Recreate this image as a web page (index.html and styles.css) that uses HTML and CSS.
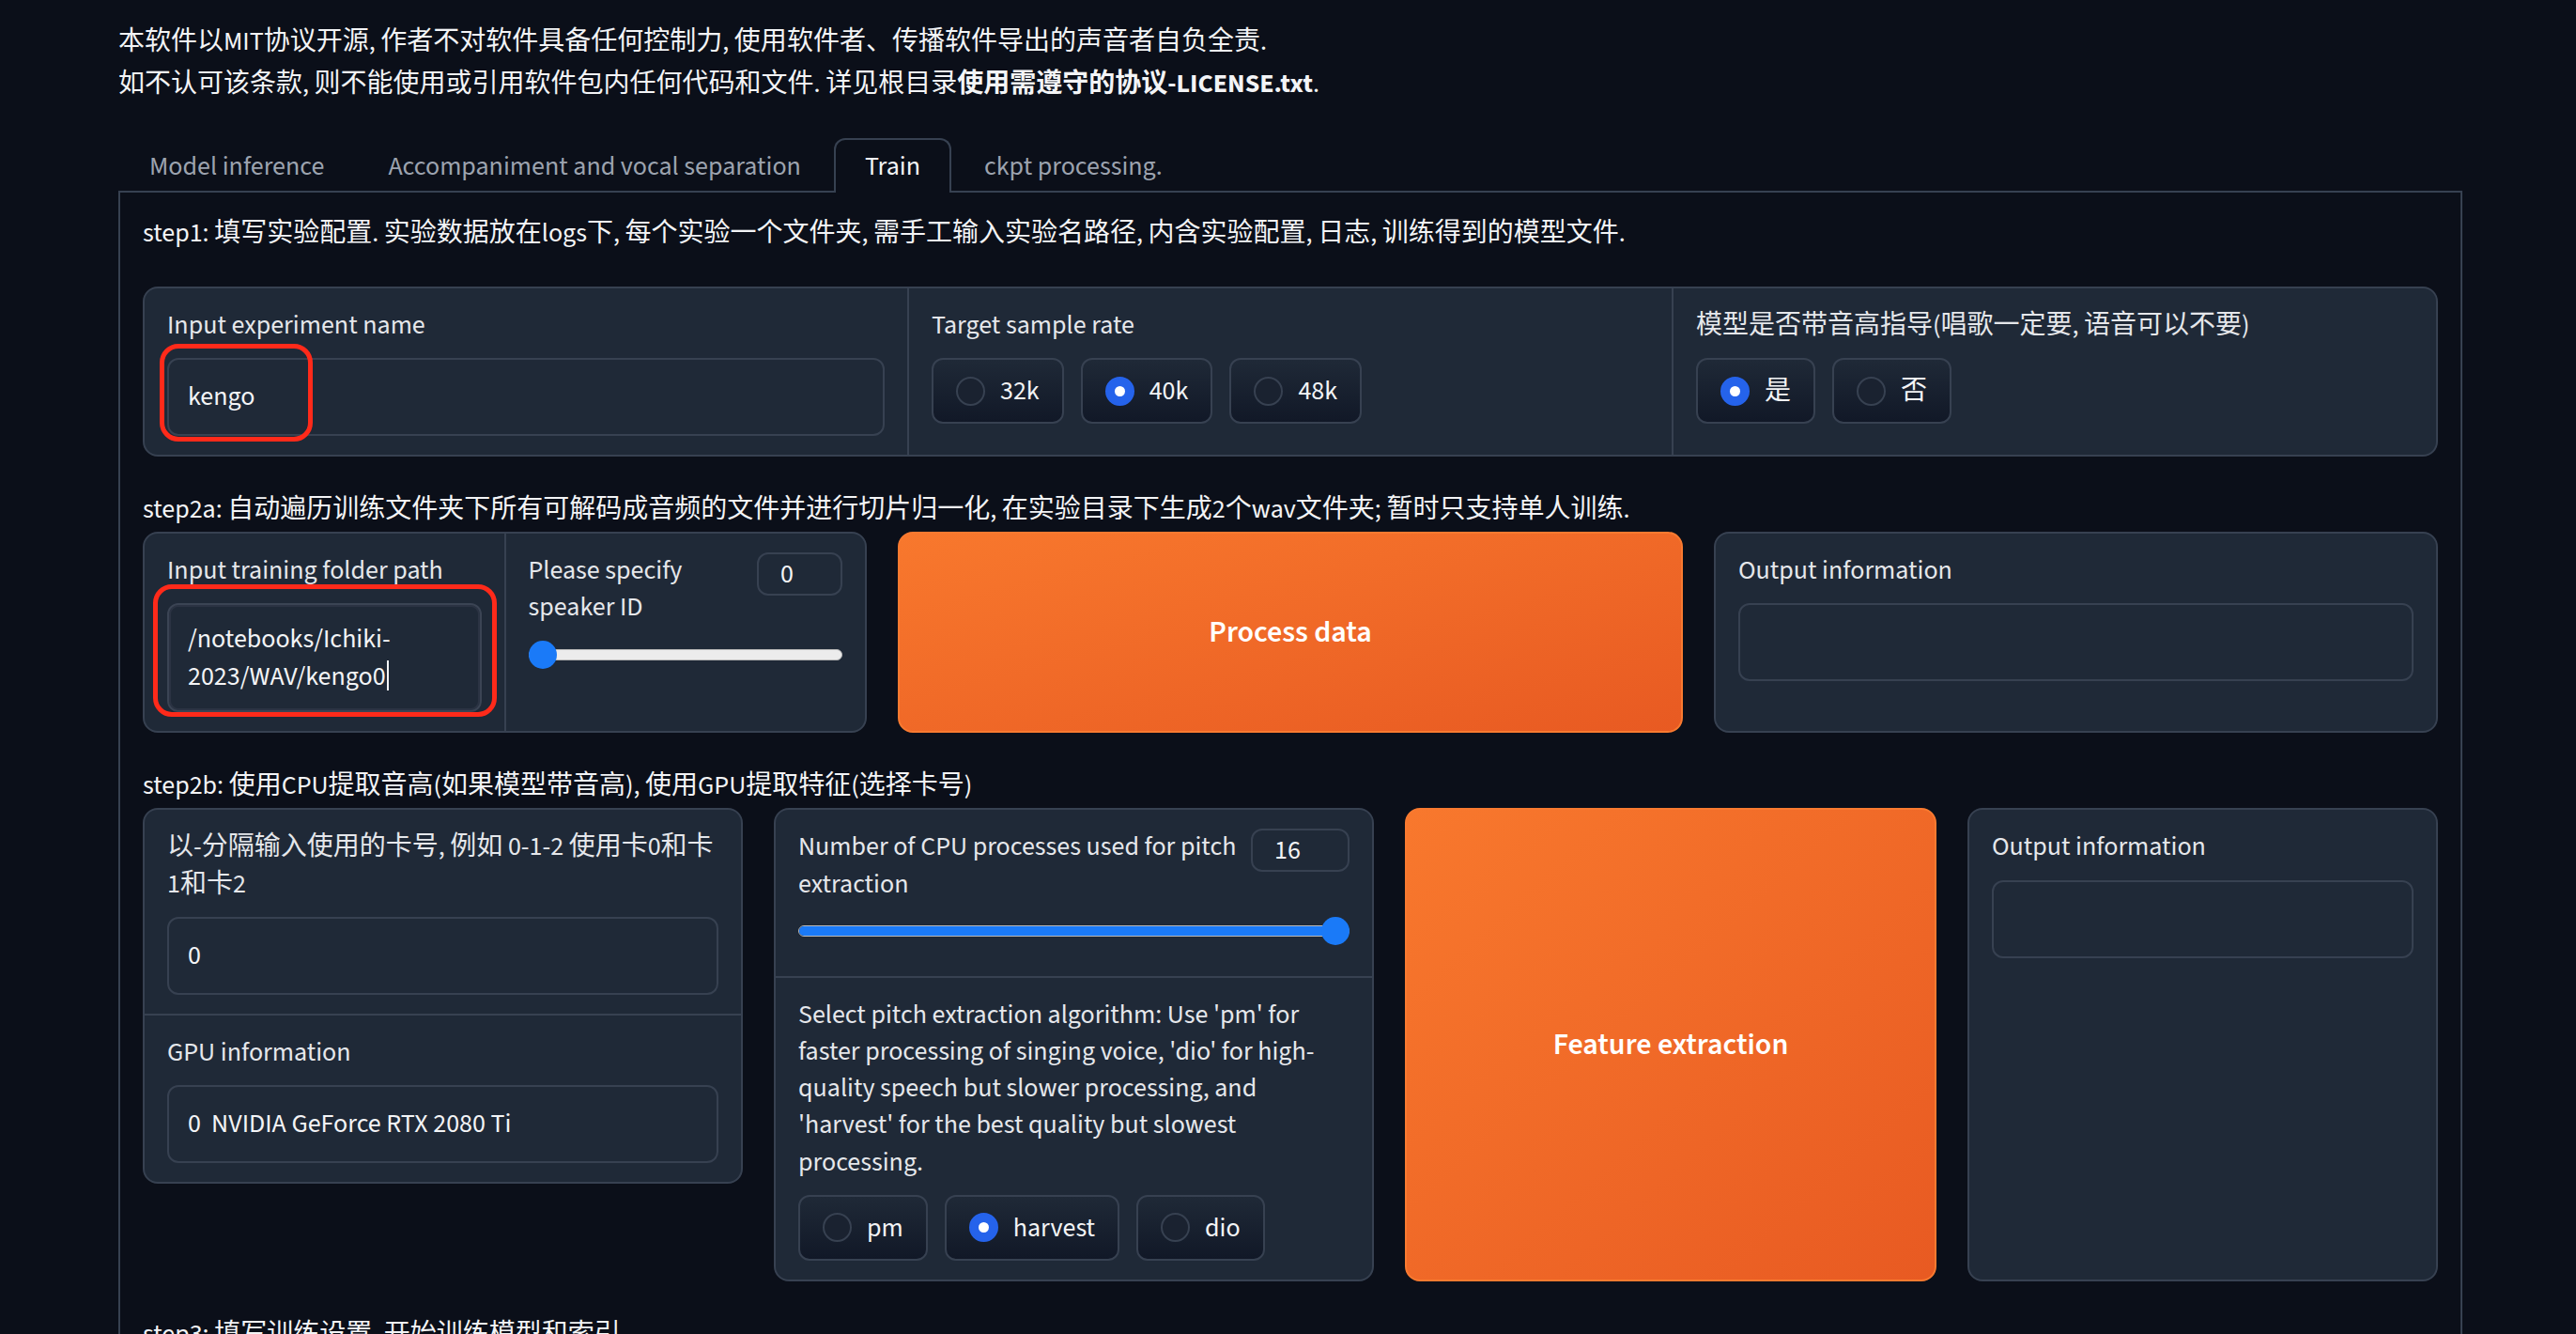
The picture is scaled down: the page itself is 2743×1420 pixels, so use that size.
FILE: index.html
```html
<!DOCTYPE html>
<html lang="zh">
<head>
<meta charset="utf-8">
<title>Train</title>
<link rel="stylesheet" href="styles.css">
</head>
<body>
<div class="app">
  <div class="intro">
    <p>本软件以MIT协议开源, 作者不对软件具备任何控制力, 使用软件者、传播软件导出的声音者自负全责.</p>
    <p>如不认可该条款, 则不能使用或引用软件包内任何代码和文件. 详见根目录<strong>使用需遵守的协议-LICENSE.txt</strong>.</p>
  </div>

  <div class="tabs">
    <div class="tabnav">
      <button class="tab">Model inference</button>
      <button class="tab">Accompaniment and vocal separation</button>
      <button class="tab active">Train</button>
      <button class="tab">ckpt processing.</button>
    </div>

    <div class="panel">
      <div class="md md-first">step1: 填写实验配置. 实验数据放在logs下, 每个实验一个文件夹, 需手工输入实验名路径, 内含实验配置, 日志, 训练得到的模型文件.</div>

      <div class="form">
        <div class="field">
          <span class="label">Input experiment name</span>
          <div class="input">kengo</div>
          <div class="annot annot-1"></div>
        </div>
        <div class="field">
          <span class="label">Target sample rate</span>
          <div class="radios">
            <label class="radio"><span class="dot"></span>32k</label>
            <label class="radio checked"><span class="dot"></span>40k</label>
            <label class="radio"><span class="dot"></span>48k</label>
          </div>
        </div>
        <div class="field">
          <span class="label">模型是否带音高指导(唱歌一定要, 语音可以不要)</span>
          <div class="radios">
            <label class="radio checked"><span class="dot"></span>是</label>
            <label class="radio"><span class="dot"></span>否</label>
          </div>
        </div>
      </div>

      <div class="md">step2a: 自动遍历训练文件夹下所有可解码成音频的文件并进行切片归一化, 在实验目录下生成2个wav文件夹; 暂时只支持单人训练.</div>

      <div class="row">
        <div class="form w-770">
          <div class="field">
            <span class="label">Input training folder path</span>
            <div class="input textarea">/notebooks/Ichiki-<br>2023/WAV/kengo0<span class="caret"></span></div>
            <div class="annot annot-2"></div>
          </div>
          <div class="field">
            <div class="slider-head">
              <span class="label nowrap">Please specify<br>speaker ID</span>
              <span class="num num-a">0</span>
            </div>
            <div class="range" style="--v:0">
              <div class="track"><div class="fill"></div></div>
              <div class="thumb"></div>
            </div>
          </div>
        </div>
        <button class="primary w-835">Process data</button>
        <div class="block w-770">
          <span class="label">Output information</span>
          <div class="input"></div>
        </div>
      </div>

      <div class="md">step2b: 使用CPU提取音高(如果模型带音高), 使用GPU提取特征(选择卡号)</div>

      <div class="row">
        <div class="form col top w-638">
          <div class="field">
            <span class="label nowrap">以-分隔输入使用的卡号, 例如 0-1-2 使用卡0和卡<br>1和卡2</span>
            <div class="input">0</div>
          </div>
          <div class="field">
            <span class="label">GPU information</span>
            <div class="input">0&nbsp;&nbsp;NVIDIA GeForce RTX 2080 Ti</div>
          </div>
        </div>
        <div class="form col w-638">
          <div class="field fixed">
            <div class="slider-head">
              <span class="label nowrap">Number of CPU processes used for pitch<br>extraction</span>
              <span class="num num-b">16</span>
            </div>
            <div class="range" style="--v:1">
              <div class="track"><div class="fill"></div></div>
              <div class="thumb"></div>
            </div>
          </div>
          <div class="field">
            <span class="label">Select pitch extraction algorithm: Use 'pm' for faster processing of singing voice, 'dio' for high-quality speech but slower processing, and 'harvest' for the best quality but slowest processing.</span>
            <div class="radios">
              <label class="radio"><span class="dot"></span>pm</label>
              <label class="radio checked"><span class="dot"></span>harvest</label>
              <label class="radio"><span class="dot"></span>dio</label>
            </div>
          </div>
        </div>
        <button class="primary w-565">Feature extraction</button>
        <div class="block w-500">
          <span class="label">Output information</span>
          <div class="input"></div>
        </div>
      </div>

      <div class="md">step3: 填写训练设置, 开始训练模型和索引</div>
    </div>
  </div>
</div>
</body>
</html>
```

FILE: styles.css
```css
* { box-sizing: border-box; }

html, body {
  margin: 0;
  padding: 0;
  background: #0b0f19;
}

body {
  font-family: "Source Sans 3", "Noto Sans CJK SC", "Noto Sans", sans-serif;
  font-size: 28px;
  color: #f3f4f6;
}

.app {
  padding: 22px 121px 0 126px;
}

.intro p {
  margin: 0;
  line-height: 45px;
}

.intro strong {
  font-weight: 700;
}

/* tabs */
.tabs {
  margin-top: 35px;
}

.tabnav {
  display: flex;
  gap: 2px;
  position: relative;
  z-index: 1;
  margin-bottom: -2px;
}

.tab {
  font: inherit;
  font-size: 28px;
  color: #9ca3af;
  background: transparent;
  border: 2px solid transparent;
  border-bottom: none;
  border-radius: 12px 12px 0 0;
  padding: 0 31px;
  height: 58px;
  line-height: 54px;
  cursor: pointer;
}

.tab.active {
  color: #f3f4f6;
  border-color: #374151;
  background: #0b0f19;
}

.panel {
  border: 2px solid #374151;
  border-bottom: none;
  padding: 23px 24px 80px;
}

.md {
  line-height: 40px;
  margin: 36px 0 4px;
}

.md-first {
  margin: 0 0 37px;
}

/* blocks */
.row {
  display: flex;
  gap: 33px;
  align-items: stretch;
}

.w-770 { flex: 1 1 770px; min-width: 0; }
.w-835 { flex: 1 1 835px; min-width: 0; }
.w-638 { flex: 1 1 638px; min-width: 0; }
.w-565 { flex: 1 1 565px; min-width: 0; }
.w-500 { flex: 1 1 500px; min-width: 0; }

.form {
  display: flex;
  gap: 2px;
  background: #374151;
  border: 2px solid #374151;
  border-radius: 16px;
  overflow: hidden;
}

.form.col {
  flex-direction: column;
}

.form.top {
  align-self: flex-start;
}

.field {
  background: #1f2937;
  padding: 20px 24px;
  flex: 1 1 0;
  min-width: 0;
  position: relative;
}

.form.col .field {
  flex: 1 1 auto;
}

.form.col .field.fixed {
  flex: 0 0 auto;
}

.block {
  background: #1f2937;
  border: 2px solid #374151;
  border-radius: 16px;
  padding: 20px 24px;
}

.label {
  display: block;
  line-height: 1.4;
  color: #e5e7eb;
  margin-bottom: 15px;
}

.nowrap {
  white-space: nowrap;
}

.input {
  background: #1f2937;
  border: 2px solid #374151;
  border-radius: 12px;
  padding: 20px;
  line-height: 39px;
  min-height: 83px;
  color: #f3f4f6;
}

.textarea {
  padding: 16px 20px;
  line-height: 40px;
  border-color: #3b4454;
  box-shadow: inset 0 0 0 2px #2b3343;
}

.caret {
  display: inline-block;
  width: 2px;
  height: 32px;
  background: #f3f4f6;
  vertical-align: -6px;
  margin-left: 1px;
}

/* radios */
.radios {
  display: flex;
  gap: 18px;
  flex-wrap: wrap;
}

.radio {
  display: flex;
  align-items: center;
  gap: 16px;
  height: 70px;
  padding: 0 24px;
  border: 2px solid #374151;
  border-radius: 12px;
  background: linear-gradient(to top, #111827, #1f2937);
  color: #f3f4f6;
  line-height: 1;
}

.dot {
  width: 31px;
  height: 31px;
  border-radius: 50%;
  border: 2px solid #374151;
  background: #1a2230;
  display: flex;
  align-items: center;
  justify-content: center;
  flex: none;
}

.radio.checked .dot {
  background: #2563eb;
  border-color: #2563eb;
}

.radio.checked .dot::after {
  content: "";
  width: 11px;
  height: 11px;
  border-radius: 50%;
  background: #ffffff;
}

/* slider */
.slider-head {
  display: flex;
  justify-content: space-between;
  align-items: flex-start;
  gap: 12px;
}

.slider-head .label {
  margin-bottom: 0;
}

.num {
  flex: none;
  height: 46px;
  line-height: 42px;
  padding: 0 23px;
  border: 2px solid #374151;
  border-radius: 12px;
  color: #f3f4f6;
}

.num-a { width: 91px; }
.num-b { width: 105px; }

.range {
  position: relative;
  height: 30px;
  margin: 15px 0 13px;
}

.track {
  position: absolute;
  left: 0;
  right: 0;
  top: 9px;
  height: 12px;
  border-radius: 6px;
  background: #ececec;
  border: 1px solid #b9b9b9;
  overflow: hidden;
}

.fill {
  height: 100%;
  width: calc(var(--v) * 100%);
  background: #1a7af8;
}

.thumb {
  position: absolute;
  top: 0;
  left: calc((100% - 30px) * var(--v));
  width: 30px;
  height: 30px;
  border-radius: 50%;
  background: #1a7af8;
}

/* primary buttons */
.primary {
  font: inherit;
  font-size: 32px;
  font-weight: 600;
  color: #ffffff;
  border: 2px solid #f97a30;
  border-radius: 16px;
  background: linear-gradient(to bottom right, #f8782d, #e85a22);
  padding: 0;
  cursor: pointer;
}

/* annotation overlays */
.annot {
  position: absolute;
  border: 5px solid #ff2a1a;
  border-radius: 20px;
  pointer-events: none;
}

.annot-1 {
  left: 16px;
  top: 59px;
  width: 163px;
  height: 104px;
}

.annot-2 {
  left: 9px;
  top: 54px;
  width: 366px;
  height: 141px;
}
```
